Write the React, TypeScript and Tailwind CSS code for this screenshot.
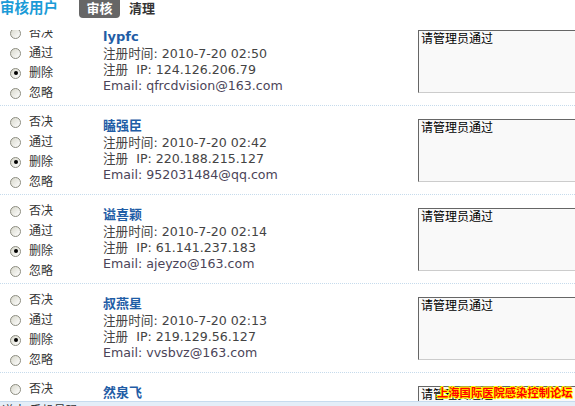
import React from "react";

const users = [
  { name: "lypfc", time: "2010-7-20 02:50", ip: "124.126.206.79", email: "qfrcdvision@163.com" },
  { name: "瞌强臣", time: "2010-7-20 02:42", ip: "220.188.215.127", email: "952031484@qq.com" },
  { name: "谥喜颖", time: "2010-7-20 02:14", ip: "61.141.237.183", email: "ajeyzo@163.com" },
  { name: "叔燕星", time: "2010-7-20 02:13", ip: "219.129.56.127", email: "vvsbvz@163.com" },
  { name: "然泉飞", time: "2010-7-20 02:11", ip: "58.62.113.40", email: "jgdmbq@163.com" },
];

const options = ["否决", "通过", "删除", "忽略"];

function Radio({ checked }: { checked: boolean }) {
  return (
    <span className="w-[11px] h-[11px] rounded-full border border-[#8c8c80] bg-gradient-to-br from-[#d8d8cc] to-white flex items-center justify-center shrink-0">
      {checked && <span className="w-[4px] h-[4px] rounded-full bg-black" />}
    </span>
  );
}

export default function App() {
  return (
    <div className="relative w-[575px] h-[406px] overflow-hidden bg-white font-['DejaVu_Sans','Noto_Sans_CJK_SC',sans-serif]">
      {/* list */}
      <div className="pt-[17px]">
        {users.map((u, idx) => (
          <div
            key={idx}
            className="flex h-[89px] border-b border-dotted border-[#c6dbec]"
          >
            {/* radios */}
            <div className="w-[103px] shrink-0 pt-[6px] pl-[10px] flex flex-col">
              {options.map((o) => (
                <label key={o} className="h-[20px] flex items-center gap-[8px] text-[12px] text-[#333]">
                  <Radio checked={o === "删除"} />
                  <span>{o}</span>
                </label>
              ))}
            </div>

            {/* info */}
            <div className="w-[315px] shrink-0 pt-[12px] text-[12.6px] leading-[16px] text-[#444]">
              <div className="font-bold text-[13px] text-[#1f5da6] mb-[1px]">{u.name}</div>
              <div>注册时间: {u.time}</div>
              <div>注册&nbsp; IP: {u.ip}</div>
              <div className="text-[#4b4458]">Email: {u.email}</div>
            </div>

            {/* note */}
            <div className="pt-[13px] shrink-0">
              <div className="w-[175px] h-[63px] bg-[#f9f9f9] border border-t-[#666] border-l-[#666] border-b-[#ccc] border-r-[#ccc] px-[2px] pt-[1px] text-[12px] leading-[15px] text-black">
                请管理员通过
              </div>
            </div>
          </div>
        ))}
      </div>

      {/* header */}
      <div className="absolute top-0 left-0 right-0 h-[30px] bg-white flex items-start gap-[21px]">
        <div className="text-[14.5px] leading-[16px] font-bold text-[#1b9bd7]">审核用户</div>
        <div className="flex items-start gap-[9px]">
          <span className="h-[18px] w-[41px] rounded-b-[4px] bg-[#666] text-white text-[13px] font-bold flex items-center justify-center">
            审核
          </span>
          <span className="text-[13px] leading-[18px] font-bold text-[#333]">清理</span>
        </div>
      </div>

      {/* watermark */}
      <div className="absolute left-[437px] top-[386px] text-[11.3px] leading-[16px] font-bold text-[#ff0000] [text-shadow:1px_0_#ff0,-1px_0_#ff0,0_1px_#ff0,0_-1px_#ff0,1px_1px_#ff0,-1px_-1px_#ff0]">
        上海国际医院感染控制论坛
      </div>

      {/* bottom bar */}
      <div className="absolute left-0 right-0 bottom-0 h-[5px] overflow-hidden bg-[#e4eef8] border-t border-[#c7dbee]">
        <div className="pl-[2px] pt-[2px] text-[12px] leading-[14px] text-[#333]">道人 手机号码</div>
      </div>
    </div>
  );
}
